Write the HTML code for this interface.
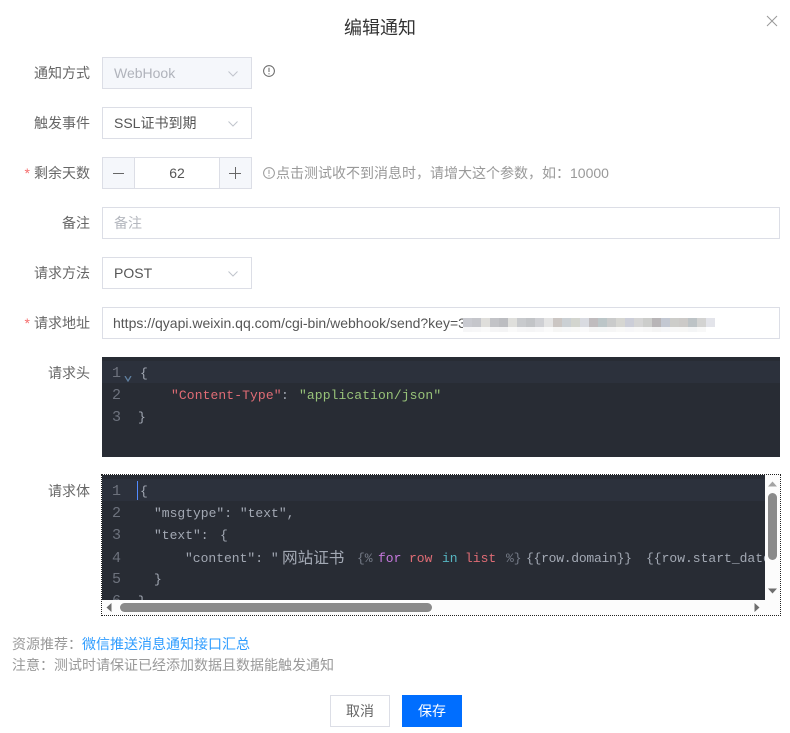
<!DOCTYPE html>
<html lang="zh"><head><meta charset="utf-8"><title>编辑通知</title>
<style>
*{box-sizing:border-box}
html,body{margin:0;padding:0;background:#fff}
#p{position:relative;width:790px;height:733px;overflow:hidden;background:#fff;font:14px/20px "Liberation Sans","Noto Sans CJK SC",sans-serif;color:#606266}
#p>*{position:absolute}
.l{width:90px;left:0;text-align:right;color:#666;height:20px;white-space:nowrap}
.star{color:#f56c6c;margin-right:4px;font-size:14px}
.b{border:1px solid #dcdee6;background:#fff;height:32px;line-height:30px;padding-left:11px;color:#555;white-space:nowrap;overflow:hidden}
.ch{width:10px;height:6px}
.ed{background:#282c34;overflow:hidden;font:13px/22px "Liberation Mono","Noto Sans CJK SC",monospace;color:#a3a9b4}
.ed>*{position:absolute;white-space:pre}
.ac{background:#2c313c;height:22px;left:0;right:0}
.n{left:10px;color:#6d727d;width:12px;font-size:15px}
.r{color:#e06c75}.g{color:#98c379}.pu{color:#c678dd}.c{color:#56b6c2}.d{color:#747a86}
.zh{font-size:15.6px}
#blur{left:463px;top:318px;width:253px;height:14px;display:flex;flex-wrap:nowrap}
#blur i{display:block;width:9px;height:14px;flex:none}
</style></head><body><div id="p">
<div style="left:344px;top:16px;font-size:18px;line-height:24px;color:#333;white-space:nowrap">编辑通知</div>
<svg style="left:766px;top:15px" width="12" height="12" viewBox="0 0 12 12"><path d="M1 1L11 11M11 1L1 11" stroke="#999" stroke-width="1" fill="none"/></svg>

<div class="l" style="top:63px">通知方式</div>
<div class="b" style="left:102px;top:57px;width:150px;background:#f5f7fb;color:#b0b3bb">WebHook</div>
<svg class="ch" style="left:228px;top:71px" viewBox="0 0 10 6"><path d="M.5.5L5 5L9.5.5" stroke="#c0c4cc" fill="none"/></svg>
<svg style="left:263px;top:65px" width="12" height="12" viewBox="0 0 12 12"><circle cx="6" cy="6" r="5.4" stroke="#666" fill="none"/><path d="M6 2.8V7M6 8.2V9.4" stroke="#666" fill="none"/></svg>

<div class="l" style="top:113px">触发事件</div>
<div class="b" style="left:102px;top:107px;width:150px">SSL证书到期</div>
<svg class="ch" style="left:228px;top:121px" viewBox="0 0 10 6"><path d="M.5.5L5 5L9.5.5" stroke="#c0c4cc" fill="none"/></svg>

<div class="l" style="top:163px"><span class="star">*</span>剩余天数</div>
<div class="b" style="left:102px;top:157px;width:150px;padding:0;text-align:center">62</div>
<div style="left:102px;top:157px;width:33px;height:32px;background:#f5f7fb;border:1px solid #dcdee6"></div>
<div style="left:219px;top:157px;width:33px;height:32px;background:#f5f7fb;border:1px solid #dcdee6"></div>
<svg style="left:113px;top:167px" width="12" height="12" viewBox="0 0 12 12"><path d="M0 6.5H11" stroke="#666" fill="none"/></svg>
<svg style="left:229px;top:167px" width="12" height="12" viewBox="0 0 12 12"><path d="M0 6.5H12M6.5 0V12" stroke="#666" fill="none"/></svg>
<svg style="left:263px;top:167px" width="12" height="12" viewBox="0 0 12 12"><circle cx="6" cy="6" r="5.4" stroke="#999" fill="none"/><path d="M6 2.8V7M6 8.2V9.4" stroke="#999" fill="none"/></svg>
<div style="left:276px;top:163px;color:#999;white-space:nowrap">点击测试收不到消息时，请增大这个参数，如：10000</div>

<div class="l" style="top:213px">备注</div>
<div class="b" style="left:102px;top:207px;width:678px;color:#b4b7be">备注</div>

<div class="l" style="top:263px">请求方法</div>
<div class="b" style="left:102px;top:257px;width:150px">POST</div>
<svg class="ch" style="left:228px;top:271px" viewBox="0 0 10 6"><path d="M.5.5L5 5L9.5.5" stroke="#c0c4cc" fill="none"/></svg>

<div class="l" style="top:313px"><span class="star">*</span>请求地址</div>
<div class="b" style="left:102px;top:307px;width:678px;padding-left:10px">https://qyapi.weixin.qq.com/cgi-bin/webhook/send?key=3</div>
<div id="blur"><i style="background:linear-gradient(#c9cad0 9px,#f6f6f7 9px)"></i><i style="background:linear-gradient(#c5c6cb 9px,#f7f7f8 9px)"></i><i style="background:linear-gradient(#dfdedb 9px,#fafafa 9px)"></i><i style="background:linear-gradient(#c2c3c7 9px,#f5f5f6 9px)"></i><i style="background:linear-gradient(#bcbdc1 9px,#f4f4f5 9px)"></i><i style="background:linear-gradient(#dfdfdc 9px,#fafafa 9px)"></i><i style="background:linear-gradient(#c8cacd 9px,#f6f6f7 9px)"></i><i style="background:linear-gradient(#c2c4c7 9px,#f5f5f6 9px)"></i><i style="background:linear-gradient(#cfd0d4 9px,#f7f7f8 9px)"></i><i style="background:linear-gradient(#e4e4e4 9px,#fbfbfb 9px)"></i><i style="background:linear-gradient(#cbc6c3 9px,#f6f6f5 9px)"></i><i style="background:linear-gradient(#cbd0d4 9px,#f6f7f8 9px)"></i><i style="background:linear-gradient(#d3d5cf 9px,#f8f8f7 9px)"></i><i style="background:linear-gradient(#d9dbe1 9px,#fafafb 9px)"></i><i style="background:linear-gradient(#c0bcbe 9px,#f5f5f5 9px)"></i><i style="background:linear-gradient(#bcc6c8 9px,#f4f6f6 9px)"></i><i style="background:linear-gradient(#cacbcb 9px,#f6f6f6 9px)"></i><i style="background:linear-gradient(#d6d6d2 9px,#f9f9f8 9px)"></i><i style="background:linear-gradient(#ccced8 9px,#f7f7f9 9px)"></i><i style="background:linear-gradient(#d5d5d5 9px,#f9f9f9 9px)"></i><i style="background:linear-gradient(#cccdcb 9px,#f7f7f7 9px)"></i><i style="background:linear-gradient(#b8b5b7 9px,#f4f4f4 9px)"></i><i style="background:linear-gradient(#c3c8d2 9px,#f5f6f8 9px)"></i><i style="background:linear-gradient(#cdcdca 9px,#f7f7f7 9px)"></i><i style="background:linear-gradient(#cccac8 9px,#f7f7f6 9px)"></i><i style="background:linear-gradient(#bdc3c6 9px,#f4f5f6 9px)"></i><i style="background:linear-gradient(#d3d3d2 9px,#f8f8f8 9px)"></i><i style="background:linear-gradient(#e3e4ea 9px,#fff 9px)"></i></div>

<div class="l" style="top:363px">请求头</div>
<div class="ed" style="left:102px;top:357px;width:678px;height:100px">
<div class="ac" style="top:4px"></div>
<div class="n" style="top:6px">1</div><div class="n" style="top:28px">2</div><div class="n" style="top:50px">3</div>
<svg style="left:22px;top:19px" width="8" height="6" viewBox="0 0 8 6"><path d="M1 0L4 5L7 0" stroke="#5f7f9f" stroke-width="1.3" fill="none"/></svg>
<div style="left:38px;top:6px">{</div>
<div class="r" style="left:69px;top:28px;letter-spacing:.1px">"Content-Type"</div>
<div style="left:179px;top:28px">:</div>
<div class="g" style="left:197px;top:28px;letter-spacing:.1px">"application/json"</div>
<div style="left:36px;top:50px">}</div>
</div>

<div class="l" style="top:481px">请求体</div>
<div style="left:101px;top:474px;width:680px;height:142px;border:1px dotted #222"></div>
<div class="ed" style="left:102px;top:475px;width:663px;height:125px">
<div class="ac" style="top:4px"></div>
<div style="left:35px;top:6px;width:1px;height:19px;background:#528bff"></div>
<div class="n" style="top:6px">1</div><div class="n" style="top:28px">2</div><div class="n" style="top:50px">3</div><div class="n" style="top:73px">4</div><div class="n" style="top:94px">5</div><div class="n" style="top:116px">6</div>
<div style="left:38px;top:6px">{</div>
<div style="left:52px;top:28px">"msgtype": "text",</div>
<div style="left:52px;top:50px">"text":</div>
<div style="left:118px;top:50px">{</div>
<div style="left:83px;top:73px">"content": "</div>
<div class="zh" style="left:180px;top:73px">网站证书</div>
<div class="d" style="left:255px;top:73px">{%</div>
<div class="pu" style="left:276px;top:73px">for</div>
<div class="r" style="left:307px;top:73px">row</div>
<div class="c" style="left:340px;top:73px">in</div>
<div class="r" style="left:363px;top:73px">list</div>
<div class="d" style="left:404px;top:73px">%}</div>
<div style="left:424px;top:73px;letter-spacing:-.25px">{{row.domain}}</div>
<div style="left:544px;top:73px">{{row.start_date</div>
<div style="left:52px;top:94px">}</div>
<div style="left:36px;top:116px">}</div>
</div>
<div style="left:102px;top:600px;width:678px;height:15px;background:#fcfcfc"></div>
<div style="left:765px;top:475px;width:15px;height:140px;background:#fcfcfc"></div>
<div style="left:120px;top:603px;width:312px;height:9px;border-radius:5px;background:#8a8a8a"></div>
<div style="left:768px;top:493px;width:9px;height:67px;border-radius:5px;background:#8a8a8a"></div>
<svg style="left:768px;top:481px" width="9" height="6"><path d="M0 5.5L4.5 .5L9 5.5Z" fill="#a3a3a3"/></svg>
<svg style="left:768px;top:588px" width="9" height="6"><path d="M0 .5L4.5 5.5L9 .5Z" fill="#6e6e6e"/></svg>
<svg style="left:106px;top:603px" width="6" height="9"><path d="M5.5 0L.5 4.5L5.5 9Z" fill="#6e6e6e"/></svg>
<svg style="left:754px;top:603px" width="6" height="9"><path d="M.5 0L5.5 4.5L.5 9Z" fill="#6e6e6e"/></svg>

<div style="left:12px;top:634px;color:#999;white-space:nowrap">资源推荐：<span style="color:#2e9cff">微信推送消息通知接口汇总</span></div>
<div style="left:12px;top:655px;color:#999;white-space:nowrap">注意：测试时请保证已经添加数据且数据能触发通知</div>

<div style="left:330px;top:695px;width:60px;height:32px;border:1px solid #dcdee6;text-align:center;line-height:30px;color:#666">取消</div>
<div style="left:402px;top:695px;width:60px;height:32px;background:#006eff;text-align:center;line-height:32px;color:#fff">保存</div>
</div></body></html>
